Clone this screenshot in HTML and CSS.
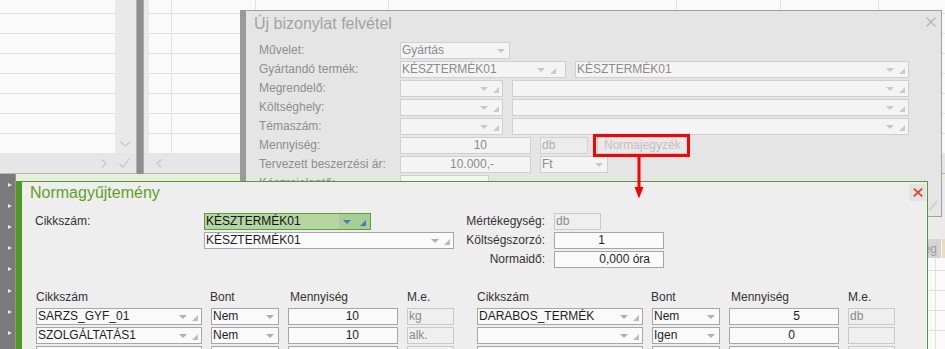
FILE: index.html
```html
<!DOCTYPE html>
<html lang="hu">
<head>
<meta charset="utf-8">
<title>Normagyűjtemény</title>
<link rel="stylesheet" href="styles.css">
</head>
<body>
<div class="desktop">
  <div class="bg">
    <div class="bg-top">
      <div class="panel panel-a">
        <div class="panel-body">
          <div class="grid-area"></div>
          <div class="vscroll">
            <svg class="ico" width="11" height="6" viewBox="0 0 11 6"><path d="M0.5 0.5 L5.5 5.2 L10.5 0.5"/></svg>
          </div>
        </div>
        <div class="panel-foot foot-a">
          <svg class="ico" width="6" height="9" viewBox="0 0 6 9"><path d="M0.7 0.5 L5.2 4.5 L0.7 8.5"/></svg>
          <svg class="ico" width="11" height="10" viewBox="0 0 11 10"><path d="M0.5 5.8 L3.8 9.2 L10.5 0.5"/></svg>
        </div>
      </div>
      <div class="splitter"></div>
      <div class="panel panel-b">
        <div class="panel-body"><div class="grid-area grid-b"></div></div>
        <div class="panel-foot foot-b">
          <svg class="ico" width="6" height="9" viewBox="0 0 6 9"><path d="M5.3 0.5 L0.8 4.5 L5.3 8.5"/></svg>
        </div>
      </div>
    </div>
    <div class="bg-bottom">
      <div class="rail"><i></i><i></i><i></i><i></i><i></i><i></i><i></i><i></i></div>
      <div class="bg-main">
        <div class="green-strip"></div>
        <div class="bg-gap"></div>
        <div class="thead"><span class="th-text">Mértékegység</span><span class="th-cell"></span></div>
        <div class="tbody"></div>
      </div>
    </div>
  </div>

  <section class="dlg dlg-back">
    <header class="back-head">
      <h2 class="back-title">Új bizonylat felvétel</h2>
      <svg class="back-x" width="10" height="10" viewBox="0 0 10 10"><path d="M0.5 0.5 L9.5 9.5 M9.5 0.5 L0.5 9.5"/></svg>
    </header>
    <div class="bform">
      <div class="brow"><span class="blabel">Művelet:</span>
        <div class="bfields"><div class="fld combo w110"><span class="val">Gyártás</span><i class="arr"></i></div></div>
      </div>
      <div class="brow"><span class="blabel">Gyártandó termék:</span>
        <div class="bfields">
          <div class="fld combo w166"><span class="val">KÉSZTERMÉK01</span><i class="arr"></i><i class="grip grip-wide"></i></div>
          <div class="fld combo grow"><span class="val">KÉSZTERMÉK01</span><i class="arr"></i><i class="grip"></i></div>
        </div>
      </div>
      <div class="brow"><span class="blabel">Megrendelő:</span>
        <div class="bfields">
          <div class="fld combo w103"><span class="val"></span><i class="arr"></i><i class="grip"></i></div>
          <div class="fld combo grow"><span class="val"></span><i class="arr"></i><i class="grip"></i></div>
        </div>
      </div>
      <div class="brow"><span class="blabel">Költséghely:</span>
        <div class="bfields">
          <div class="fld combo w103"><span class="val"></span><i class="arr"></i><i class="grip"></i></div>
          <div class="fld combo grow"><span class="val"></span><i class="arr"></i><i class="grip"></i></div>
        </div>
      </div>
      <div class="brow"><span class="blabel">Témaszám:</span>
        <div class="bfields">
          <div class="fld combo w103"><span class="val"></span><i class="arr"></i><i class="grip"></i></div>
          <div class="fld combo grow"><span class="val"></span><i class="arr"></i><i class="grip"></i></div>
        </div>
      </div>
      <div class="brow"><span class="blabel">Mennyiség:</span>
        <div class="bfields">
          <div class="fld num w131 pr-qty"><span class="val">10</span></div>
          <div class="fld ro w48"><span class="val">db</span></div>
          <button class="btn-norm" type="button">Normajegyzék</button>
        </div>
      </div>
      <div class="brow"><span class="blabel">Tervezett beszerzési ár:</span>
        <div class="bfields">
          <div class="fld num w131 pr-price"><span class="val">10.000,-</span></div>
          <div class="fld combo w68"><span class="val">Ft</span><i class="arr"></i></div>
        </div>
      </div>
      <div class="brow"><span class="blabel">Készrejelentő:</span>
        <div class="bfields"><div class="fld w89"><span class="val"></span></div></div>
      </div>
    </div>
    <svg class="back-grip" width="10" height="10" viewBox="0 0 10 10"><path d="M1 9.5 L9 0.5"/></svg>
  </section>

  <section class="dlg dlg-front">
    <header class="front-head">
      <h1 class="front-title">Normagyűjtemény</h1>
      <button class="close-btn" type="button" aria-label="Bezárás"><svg width="10" height="9" viewBox="0 0 10 9"><path d="M0.8 0.6 L9.2 8.4 M9.2 0.6 L0.8 8.4"/></svg></button>
    </header>
    <div class="fbody">
      <div class="topgrid">
        <span class="flabel">Cikkszám:</span>
        <div class="fld combo sel w167"><span class="val">KÉSZTERMÉK01</span><span class="btnzone"><i class="arr"></i><i class="grip"></i></span></div>
        <span class="rlabel">Mértékegység:</span>
        <div class="fld ro w47"><span class="val">db</span></div>

        <span></span>
        <div class="fld combo w250"><span class="val">KÉSZTERMÉK01</span><i class="arr"></i><i class="grip"></i></div>
        <span class="rlabel">Költségszorzó:</span>
        <div class="fld num w110 pr-mult"><span class="val">1</span></div>

        <span></span>
        <span></span>
        <span class="rlabel">Normaidő:</span>
        <div class="fld num w110 pr-time"><span class="val">0,000 óra</span></div>
      </div>

      <div class="tbl">
        <div class="tgroup">
          <span class="th">Cikkszám</span>
          <span class="th th-bont">Bont</span>
          <span class="th th-qty">Mennyiség</span>
          <span class="th">M.e.</span>

          <div class="fld combo"><span class="val">SARZS_GYF_01</span><i class="arr"></i><i class="grip"></i></div>
          <div class="fld combo"><span class="val">Nem</span><i class="arr"></i></div>
          <div class="fld num pr-row"><span class="val">10</span></div>
          <div class="fld ro"><span class="val">kg</span></div>

          <div class="fld combo"><span class="val">SZOLGÁLTATÁS1</span><i class="arr"></i><i class="grip"></i></div>
          <div class="fld combo"><span class="val">Nem</span><i class="arr"></i></div>
          <div class="fld num pr-row"><span class="val">10</span></div>
          <div class="fld ro"><span class="val">alk.</span></div>

          <div class="fld combo"><span class="val"></span><i class="arr"></i><i class="grip"></i></div>
          <div class="fld combo"><span class="val"></span><i class="arr"></i></div>
          <div class="fld num pr-row"><span class="val"></span></div>
          <div class="fld ro"><span class="val"></span></div>
        </div>
        <div class="tgroup">
          <span class="th">Cikkszám</span>
          <span class="th th-bont">Bont</span>
          <span class="th th-qty">Mennyiség</span>
          <span class="th">M.e.</span>

          <div class="fld combo"><span class="val">DARABOS_TERMÉK</span><i class="arr"></i><i class="grip"></i></div>
          <div class="fld combo"><span class="val">Nem</span><i class="arr"></i></div>
          <div class="fld num pr-row"><span class="val">5</span></div>
          <div class="fld ro"><span class="val">db</span></div>

          <div class="fld combo"><span class="val"></span><i class="arr"></i><i class="grip"></i></div>
          <div class="fld combo"><span class="val">Igen</span><i class="arr"></i></div>
          <div class="fld num pr-zero"><span class="val">0</span></div>
          <div class="fld ro"><span class="val"></span></div>

          <div class="fld combo"><span class="val"></span><i class="arr"></i><i class="grip"></i></div>
          <div class="fld combo"><span class="val"></span><i class="arr"></i></div>
          <div class="fld num pr-row"><span class="val"></span></div>
          <div class="fld ro"><span class="val"></span></div>
        </div>
      </div>
    </div>
  </section>

  <svg class="callout" width="945" height="349" viewBox="0 0 945 349" aria-hidden="true">
    <rect x="594.5" y="135.5" width="94" height="20" fill="none" stroke="#ff0000" stroke-width="3"/>
    <rect x="637.5" y="157" width="3" height="31" fill="#ff0000"/>
    <polygon points="634.5,187 643.5,187 639,198.5" fill="#ff0000"/>
  </svg>
</div>
</body>
</html>
```

FILE: styles.css
```css
* { box-sizing: border-box; margin: 0; padding: 0; }
html, body { width: 945px; height: 349px; overflow: hidden; background: #ebebeb; }
body { font-family: "Liberation Sans", Arial, sans-serif; font-size: 12px; color: #222; }
.desktop { position: relative; width: 945px; height: 349px; overflow: hidden; }

/* ---------- background application ---------- */
.bg-top { display: flex; height: 174px; }
.panel { display: flex; flex-direction: column; background: #e9e9e9; }
.panel-a { width: 137px; border-right: 1px solid #b2b2b2; }
.panel-b { flex: 1; border-left: 1px solid #a9a9a9; }
.panel-body { flex: 1; display: flex; }
.grid-area {
  flex: 1;
  background: repeating-linear-gradient(to bottom, transparent 0 13px, #e2e2e2 13px 14px, transparent 14px 20px), #fafafa;
}
.grid-b {
  margin-left: 5px;
  background-color: #fafafa;
  background-image:
    linear-gradient(#e2e2e2, #e2e2e2),
    linear-gradient(#e2e2e2, #e2e2e2),
    linear-gradient(#e2e2e2, #e2e2e2),
    linear-gradient(#e2e2e2, #e2e2e2),
    linear-gradient(#e2e2e2, #e2e2e2),
    linear-gradient(#e2e2e2, #e2e2e2),
    repeating-linear-gradient(to bottom, transparent 0 13px, #e2e2e2 13px 14px, transparent 14px 20px);
  background-size: 1px 100%, 1px 100%, 1px 100%, 1px 100%, 1px 100%, 1px 100%, 100% 100%;
  background-position: 22px 0, 106px 0, 239px 0, 527px 0, 631px 0, 729px 0, 0 0;
  background-repeat: no-repeat;
}
.vscroll { width: 21px; display: flex; align-items: flex-end; justify-content: center; padding-bottom: 6px; }
.ico path { fill: none; stroke: #c6c6c6; stroke-width: 1.2; }
.panel-foot { height: 21px; background: #e6e6e6; border-bottom: 1px solid #b8b8b8; display: flex; align-items: center; }
.foot-a { justify-content: flex-end; gap: 12px; padding-right: 6px; }
.foot-b { padding-left: 12px; }
.splitter { width: 6px; background: #8e8e8e; }

.bg-bottom { display: flex; height: 175px; }
.rail { width: 16px; background: #7a7a7a; border-right: 1px solid #959595; display: flex; flex-direction: column; padding-left: 8px; }
.rail i { height: 21.2px; display: flex; align-items: center; }
.rail i::before { content: ""; border-left: 4px solid #e8e8e8; border-top: 2.5px solid transparent; border-bottom: 2.5px solid transparent; }
.bg-main { flex: 1; display: flex; flex-direction: column; }
.green-strip { height: 7px; background: #e3eedb; }
.bg-gap { height: 58px; background: #ebebeb; }
.thead { height: 19px; background: #d4d4d4; display: flex; justify-content: flex-end; align-items: center; color: #9c9c9c; }
.th-text { padding-right: 4px; }
.th-cell { width: 4px; height: 100%; border-left: 1px solid #f2f2f2; background: #ecdcbc; }
.tbody {
  flex: 1;
  background:
    linear-gradient(#e2e2e2, #e2e2e2) 919px 0 / 1px 100% no-repeat,
    repeating-linear-gradient(to bottom, transparent 0 12px, #e2e2e2 12px 13px, transparent 13px 20px),
    #fafafa;
}

/* ---------- dialogs ---------- */
.dlg { position: absolute; }

.dlg-back {
  left: 240px; top: 10px; width: 702px; height: 207px;
  background: #e5e5e5;
  border: 1px solid #a0a0a0;
  border-left: 6px solid #9a9a9a;
}
.back-head { display: flex; align-items: flex-start; padding: 4px 5px 0 8px; }
.back-title { flex: 1; font-size: 16px; font-weight: normal; line-height: 18px; color: #a3a3a3; }
.back-x { margin-top: 2px; }
.back-x path { fill: none; stroke: #b6b6b6; stroke-width: 1.3; }
.back-grip { position: absolute; right: 3px; bottom: 5px; }
.back-grip path { fill: none; stroke: #cbcbcb; stroke-width: 1.2; }

.bform { display: flex; flex-direction: column; gap: 2px; margin-top: 9px; padding-left: 13px; width: 663px; }
.brow { display: grid; grid-template-columns: 141px 1fr; height: 17px; align-items: center; }
.blabel { color: #8e8e8e; line-height: 17px; white-space: nowrap; }
.bfields { display: flex; gap: 9px; height: 17px; }

/* fields */
.fld {
  height: 17px;
  border: 1px solid #a6a6a6;
  background: #fafafa;
  display: flex;
  align-items: center;
  line-height: 15px;
  white-space: nowrap;
  overflow: hidden;
  color: #1e1e1e;
}
.val { flex: 1; padding-left: 1px; overflow: hidden; }
.fld.num .val { text-align: right; padding-left: 0; }
.fld.ro { background: #efefef; border-color: #c9c9c9; color: #8a8a8a; }

.arr {
  width: 0; height: 0;
  border-left: 4px solid transparent;
  border-right: 4px solid transparent;
  border-top: 4px solid #b0b0b0;
  margin-right: 4px;
}
.grip {
  align-self: flex-end;
  width: 0; height: 0;
  border-left: 6px solid transparent;
  border-bottom: 6px solid #bcbcbc;
  margin: 0 3px 3px 1px;
}
.arr + .grip { margin-left: 1px; }

.dlg-back .fld { background: #f4f4f4; border-color: #cfcfcf; color: #8b8b8b; }
.dlg-back .fld.ro { background: #ececec; border-color: #d2d2d2; color: #adadad; }
.dlg-back .arr { border-top-color: #c8c8c8; }
.dlg-back .grip { border-bottom-color: #cbcbcb; }
.grip.grip-wide { margin-right: 9px; }

.grow { flex: 1; }
.w47 { width: 47px; }
.w48 { width: 48px; }
.w68 { width: 68px; }
.w89 { width: 89px; }
.w103 { width: 103px; }
.w110 { width: 110px; }
.w131 { width: 131px; }
.w166 { width: 166px; }
.w167 { width: 167px; }
.w250 { width: 250px; }

.pr-qty .val { padding-right: 43px; }
.pr-price .val { padding-right: 36px; }
.pr-mult .val { padding-right: 58px; }
.pr-time .val { padding-right: 13px; }
.pr-row .val { padding-right: 38px; }
.pr-zero .val { padding-right: 43px; }

.btn-norm {
  width: 92px; height: 17px;
  border: 1px solid #cdcdcd;
  background: #e9e9e9;
  color: #c1c1c1;
  font: inherit;
  line-height: 15px;
  text-align: left;
  padding-left: 6px;
}

/* front dialog */
.dlg-front {
  left: 16px; top: 181px; width: 912px; height: 200px;
  background: #eeeeee;
  border: 1px solid #56992d;
  border-left: 6px solid #4f9a22;
  border-bottom: none;
}
.front-head { display: flex; align-items: flex-start; height: 20px; padding: 2px 1px 0 8px; }
.front-title { flex: 1; font-size: 16px; font-weight: normal; line-height: 18px; color: #5fa023; }
.close-btn { width: 17px; height: 17px; border: none; background: #e3e3e3; display: flex; align-items: center; justify-content: center; }
.close-btn path { fill: none; stroke: #d64a32; stroke-width: 1.8; }

.fbody { padding-left: 14px; }
.topgrid {
  display: grid;
  grid-template-columns: 168px 250px 100px 110px;
  grid-auto-rows: 17px;
  row-gap: 2px;
  margin-top: 11px;
  align-items: center;
}
.flabel { margin-left: -1px; line-height: 17px; color: #333; }
.rlabel { text-align: right; padding-right: 9px; line-height: 17px; color: #333; }

.combo.sel { background: #b5d6a3; border-color: #5e9f36; color: #111; }
.btnzone { display: flex; align-self: stretch; align-items: center; background: #a8cd95; padding-left: 4px; }
.btnzone .arr { border-top-color: #3d7cc9; margin-right: 4px; }
.btnzone .grip { border-bottom-color: #3d7cc9; margin: 0 4px 3px 5px; }

.tbl { display: flex; gap: 23px; margin-top: 21px; }
.tgroup {
  display: grid;
  grid-template-columns: 166px 68px 110px 47px;
  column-gap: 9px;
  grid-auto-rows: 17px;
  row-gap: 2px;
}
.th { line-height: 17px; color: #333; }
.th-bont { margin-left: -1px; }
.th-qty { padding-left: 2px; }

.callout { position: absolute; left: 0; top: 0; pointer-events: none; }
```
